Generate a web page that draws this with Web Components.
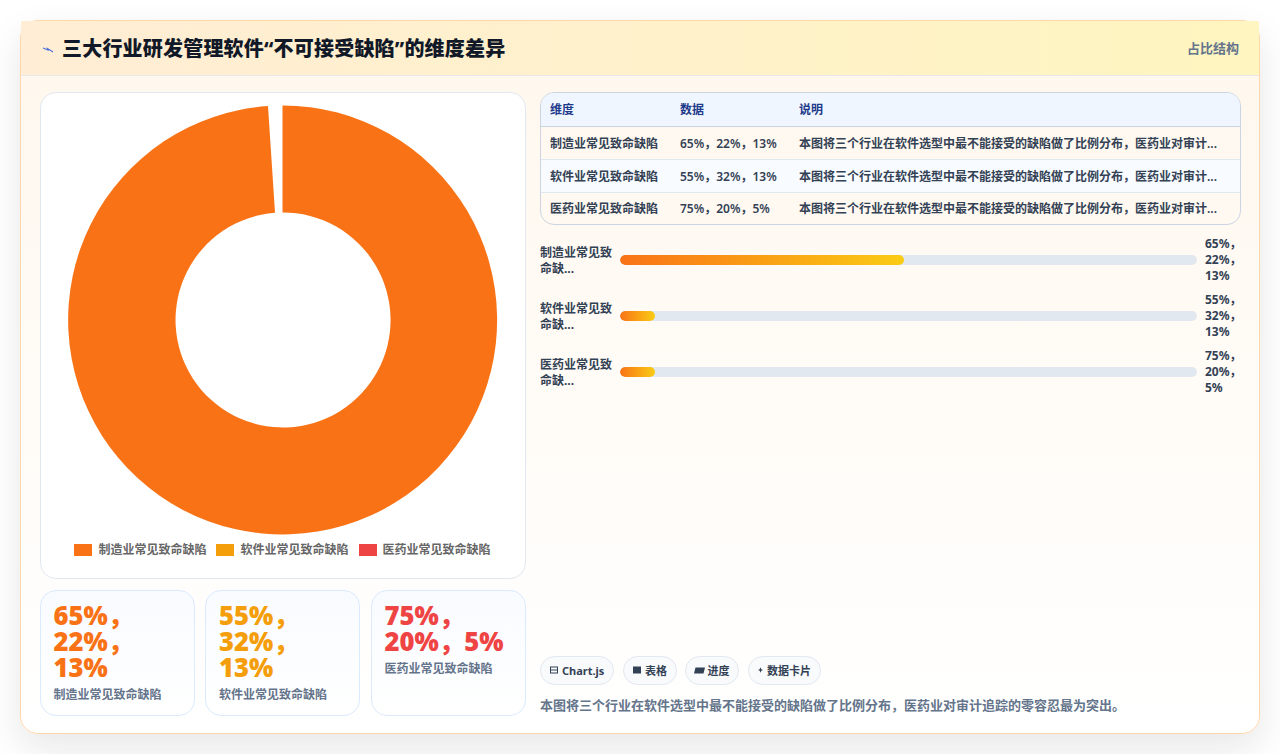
<!DOCTYPE html>
<html lang="zh">
<head>
<meta charset="utf-8">
<title>三大行业研发管理软件</title>
<style>
    html, body{
        margin: 0;
        height: 100%;
        background: #ffffff;
        font-family: "Noto Sans", "Noto Sans CJK SC", sans-serif;
    }
    body{
        padding: 20px;
        box-sizing: border-box;
    }
</style>
</head>
<body>

<panel-card heading="三大行业研发管理软件“不可接受缺陷”的维度差异" tag="占比结构">
    <div slot="left" style="display:contents">
        <donut-chart></donut-chart>
        <kpi-row>
            <kpi-card color="#f97316" value="65%，22%，13%" label="制造业常见致命缺陷"></kpi-card>
            <kpi-card color="#f59e0b" value="55%，32%，13%" label="软件业常见致命缺陷"></kpi-card>
            <kpi-card color="#ef4444" value="75%，20%，5%" label="医药业常见致命缺陷"></kpi-card>
        </kpi-row>
    </div>
    <div slot="right" style="display:contents">
        <data-table></data-table>
        <bar-list>
            <bar-row label="制造业常见致命缺..." value="65%，22%，13%" percent="49.2"></bar-row>
            <bar-row label="软件业常见致命缺..." value="55%，32%，13%" percent="6"></bar-row>
            <bar-row label="医药业常见致命缺..." value="75%，20%，5%" percent="6"></bar-row>
        </bar-list>
        <chip-row>
            <tag-chip><svg slot="icon" width="8" height="8" viewBox="0 0 8 8"><rect x=".5" y="1" width="7" height="6" fill="none" stroke="#334155"/><path d="M1 4h6" stroke="#334155"/></svg>Chart.js</tag-chip>
            <tag-chip><svg slot="icon" width="8" height="8" viewBox="0 0 8 8"><rect y=".5" width="8" height="7" fill="#334155"/></svg>表格</tag-chip>
            <tag-chip><svg slot="icon" width="8" height="8" viewBox="0 0 8 8" style="overflow:visible"><path d="M0.5 1.5H10L8.5 7.5H-1Z" fill="#334155"/></svg>进度</tag-chip>
            <tag-chip><svg slot="icon" width="5" height="8" viewBox="0 0 5 8"><path d="M2.5 1.2L3.3 3.2L5 4L3.3 4.8L2.5 6.8L1.7 4.8L0 4L1.7 3.2Z" fill="#334155"/></svg>数据卡片</tag-chip>
        </chip-row>
        <note-text>本图将三个行业在软件选型中最不能接受的缺陷做了比例分布，医药业对审计追踪的零容忍最为突出。</note-text>
    </div>
</panel-card>

<script>
class PanelCard extends HTMLElement {

    connectedCallback() {
        const shadow = this.attachShadow({ mode: 'open' })
        shadow.innerHTML = `
        <style>
            :host{
                display: flex;
                flex-direction: column;
                box-sizing: border-box;
                height: 713.5px;
                width: 1240px;
                border: 1px solid #fed7aa;
                border-radius: 18px;
                background: linear-gradient(180deg, #fff7ed 0%, #ffffff 100%);
                box-shadow: 0 14px 36px rgba(15, 23, 42, .10);
            }
            header{
                display: flex;
                align-items: center;
                height: 53.5px;
                padding: 0 20px;
                border-bottom: 1px solid #e8e8ea;
                background: linear-gradient(90deg, #ffedd5, #fef5c0);
            }
            .icon{
                display: block;
                flex: none;
                width: 21px;
                height: 12px;
                margin-top: 5px;
            }
            h1{
                flex: 1;
                margin: 0;
                font-size: 20px;
                font-weight: 800;
                letter-spacing: .2px;
                color: #111827;
            }
            .tag{
                padding-bottom: 1px;
                font-size: 13px;
                font-weight: 700;
                color: #64748b;
            }
            main{
                flex: 1;
                min-height: 0;
                display: grid;
                grid-template-columns: 486px 1fr;
                gap: 14.5px;
                padding: 16.5px 18px 18px 18.5px;
            }
            .col{
                display: flex;
                flex-direction: column;
                min-width: 0;
            }
            .left{ gap: 11px; }
        </style>
        <header>
            <svg class="icon" viewBox="0 0 21 12"><path d="M2 4L7 6L6.5 4.6L12 8" fill="none" stroke="#4a6fd8" stroke-width="1.1"/></svg>
            <h1>${this.getAttribute('heading')}</h1>
            <span class="tag">${this.getAttribute('tag')}</span>
        </header>
        <main>
            <div class="col left"><slot name="left"></slot></div>
            <div class="col"><slot name="right"></slot></div>
        </main>
        `
    }
}

class DonutChart extends HTMLElement {

    connectedCallback() {
        const shadow = this.attachShadow({ mode: 'open' })
        const legend = [
            ['#f97316', '制造业常见致命缺陷'],
            ['#f59e0b', '软件业常见致命缺陷'],
            ['#ef4444', '医药业常见致命缺陷']
        ]
        shadow.innerHTML = `
        <style>
            :host{
                flex: 1;
                min-height: 0;
                display: flex;
                flex-direction: column;
                align-items: center;
                box-sizing: border-box;
                padding-top: 11.5px;
                background: #ffffff;
                border: 1px solid #e2e8f0;
                border-radius: 16px;
            }
            svg{ display: block; }
            .legend{
                display: flex;
                gap: 10px;
                margin-top: 6px;
            }
            .item{
                display: flex;
                align-items: center;
                gap: 6px;
                font-size: 12px;
                line-height: 18px;
                font-weight: 600;
                color: #666666;
            }
            .box{
                width: 18px;
                height: 12px;
            }
        </style>
        <svg width="430" height="430" viewBox="-214.5 -215 430 430">
            <path fill="#f97316" d="M0 -214.5 A214.5 214.5 0 1 1 -14.5 -214 L-7.5 -107.2 A107.5 107.5 0 1 0 0 -107.5 Z"></path>
        </svg>
        <div class="legend">
            ${legend.map(l => `<div class="item"><span class="box" style="background:${l[0]}"></span>${l[1]}</div>`).join('')}
        </div>
        `
    }
}

class KpiRow extends HTMLElement {

    connectedCallback() {
        const shadow = this.attachShadow({ mode: 'open' })
        shadow.innerHTML = `
        <style>
            :host{
                display: grid;
                grid-template-columns: repeat(3, 1fr);
                gap: 10.5px;
                height: 125px;
            }
        </style>
        <slot></slot>
        `
    }
}

class KpiCard extends HTMLElement {

    connectedCallback() {
        const shadow = this.attachShadow({ mode: 'open' })
        shadow.innerHTML = `
        <style>
            :host{
                display: block;
                box-sizing: border-box;
                min-width: 0;
                padding: 12px 13px;
                border: 1px solid #dbeafe;
                border-radius: 16px;
                background: linear-gradient(180deg, #f8fbff, #ffffff);
            }
            .value{
                font-size: 25.6px;
                line-height: 26px;
                font-weight: 900;
                color: ${this.getAttribute('color')};
            }
            .label{
                margin-top: 6px;
                font-size: 12px;
                line-height: 16px;
                font-weight: 600;
                color: #64748b;
            }
        </style>
        <div class="value">${this.getAttribute('value')}</div>
        <div class="label">${this.getAttribute('label')}</div>
        `
    }
}

class DataTable extends HTMLElement {

    connectedCallback() {
        const shadow = this.attachShadow({ mode: 'open' })
        const desc = '本图将三个行业在软件选型中最不能接受的缺陷做了比例分布，医药业对审计...'
        const rows = [
            ['制造业常见致命缺陷', '65%，22%，13%'],
            ['软件业常见致命缺陷', '55%，32%，13%'],
            ['医药业常见致命缺陷', '75%，20%，5%']
        ]
        shadow.innerHTML = `
        <style>
            :host{
                display: block;
                flex: none;
                border: 1px solid #cbd5e1;
                border-radius: 14px;
                overflow: hidden;
            }
            table{
                width: 100%;
                border-collapse: collapse;
                table-layout: fixed;
                font-size: 12px;
            }
            th, td{
                height: 33px;
                box-sizing: border-box;
                padding: 0 9px;
                text-align: left;
                white-space: nowrap;
            }
            th{
                background: #eff6ff;
                color: #1e3a8a;
                font-weight: 700;
                border-bottom: 1px solid #cbd5e1;
            }
            td{
                color: #334155;
                font-weight: 600;
                border-bottom: 1px solid #e2e8f0;
            }
            tr:last-child td{ border-bottom: 0; height: 32px; }
            tr:nth-child(even) td{ background: #f8fbff; }
        </style>
        <table>
            <colgroup><col style="width:130px"><col style="width:119px"><col></colgroup>
            <thead><tr><th>维度</th><th>数据</th><th>说明</th></tr></thead>
            <tbody>
                ${rows.map(r => `<tr><td>${r[0]}</td><td>${r[1]}</td><td>${desc}</td></tr>`).join('')}
            </tbody>
        </table>
        `
    }
}

class BarList extends HTMLElement {

    connectedCallback() {
        const shadow = this.attachShadow({ mode: 'open' })
        shadow.innerHTML = `
        <style>
            :host{
                display: flex;
                flex-direction: column;
                gap: 8px;
                margin-top: 11px;
            }
        </style>
        <slot></slot>
        `
    }
}

class BarRow extends HTMLElement {

    connectedCallback() {
        const shadow = this.attachShadow({ mode: 'open' })
        shadow.innerHTML = `
        <style>
            :host{
                display: grid;
                grid-template-columns: 72px 1fr 36px;
                gap: 8px;
                align-items: center;
                height: 48px;
                font-size: 12px;
                line-height: 16px;
                font-weight: 700;
                color: #334155;
            }
            .label{ padding-top: 2px; }
            .track{
                height: 10px;
                border-radius: 999px;
                background: #e2e8f0;
                overflow: hidden;
            }
            .fill{
                height: 100%;
                border-radius: 999px;
                background: linear-gradient(90deg, #f97316, #facc15);
            }
        </style>
        <div class="label">${this.getAttribute('label')}</div>
        <div class="track"><div class="fill" style="width:${this.getAttribute('percent')}%"></div></div>
        <div>${this.getAttribute('value')}</div>
        `
    }
}

class ChipRow extends HTMLElement {

    connectedCallback() {
        const shadow = this.attachShadow({ mode: 'open' })
        shadow.innerHTML = `
        <style>
            :host{
                display: flex;
                gap: 8.5px;
                margin-top: auto;
            }
        </style>
        <slot></slot>
        `
    }
}

class TagChip extends HTMLElement {

    connectedCallback() {
        const shadow = this.attachShadow({ mode: 'open' })
        shadow.innerHTML = `
        <style>
            :host{
                display: inline-flex;
                align-items: center;
                gap: 4px;
                box-sizing: border-box;
                height: 29px;
                padding: 0 9px;
                border: 1px solid #e2e8f0;
                border-radius: 999px;
                background: #f8fafc;
                font-size: 11px;
                font-weight: 700;
                color: #334155;
            }
            ::slotted(svg){ display: block; }
        </style>
        <slot name="icon"></slot><span><slot></slot></span>
        `
    }
}

class NoteText extends HTMLElement {

    connectedCallback() {
        const shadow = this.attachShadow({ mode: 'open' })
        shadow.innerHTML = `
        <style>
            :host{
                display: block;
                margin-top: 10px;
                font-size: 13px;
                line-height: 20px;
                font-weight: 600;
                color: #64748b;
            }
        </style>
        <slot></slot>
        `
    }
}

window.customElements.define('panel-card', PanelCard)
window.customElements.define('donut-chart', DonutChart)
window.customElements.define('kpi-row', KpiRow)
window.customElements.define('kpi-card', KpiCard)
window.customElements.define('data-table', DataTable)
window.customElements.define('bar-list', BarList)
window.customElements.define('bar-row', BarRow)
window.customElements.define('chip-row', ChipRow)
window.customElements.define('tag-chip', TagChip)
window.customElements.define('note-text', NoteText)
</script>
</body>
</html>
